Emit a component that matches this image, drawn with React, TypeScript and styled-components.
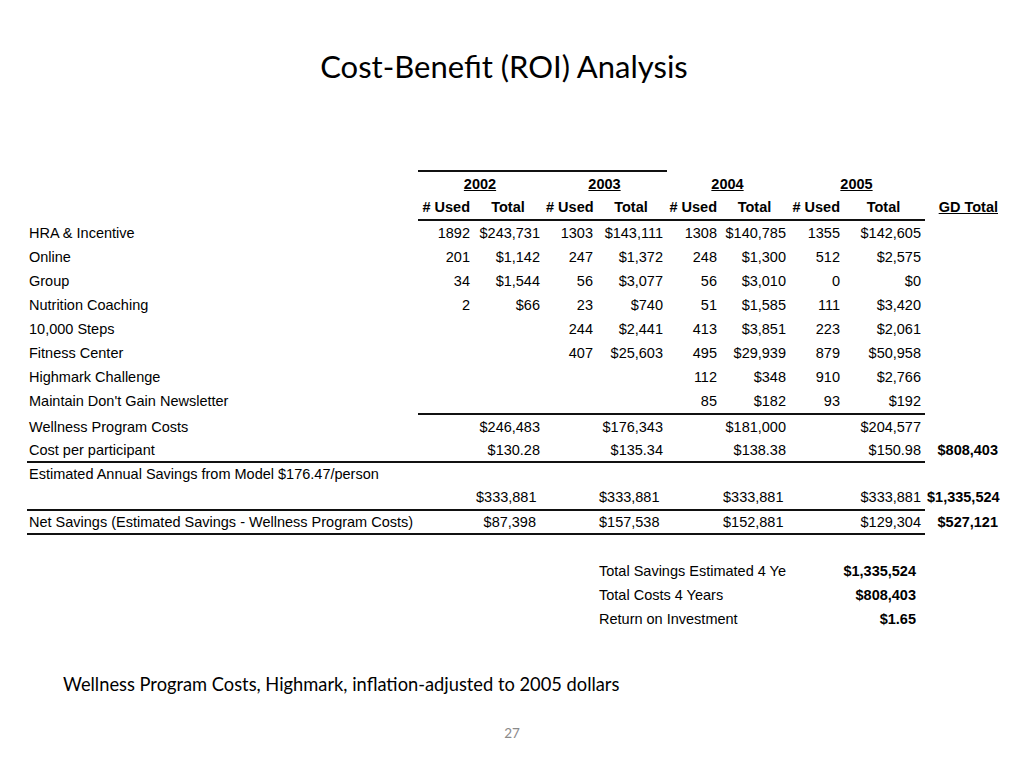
import React from 'react';
import styled, { createGlobalStyle } from 'styled-components';

const GlobalStyle = createGlobalStyle`
  html, body { margin: 0; padding: 0; background: #ffffff; }
  body { width: 1024px; height: 768px; overflow: hidden; }
`;

const COLS = '391px 56px 70px 53px 70px 54px 69px 54px 81px 77px';

const Slide = styled.div`
  width: 1024px;
  height: 768px;
  display: flex;
  flex-direction: column;
  box-sizing: border-box;
  background: #fff;
`;

const Title = styled.h1`
  margin: 0;
  padding: 48px 16px 0 0;
  height: 36px;
  text-align: center;
  font-family: Lato, 'Open Sans', sans-serif;
  font-weight: 400;
  font-size: 31px;
  line-height: 36px;
  color: #000;
`;

const Sheet = styled.div`
  margin-top: 86px;
  padding-left: 27px;
  display: flex;
  flex-direction: column;
  font-family: 'Liberation Sans', Arial, sans-serif;
  font-size: 14.5px;
  color: #000;
`;

const Row = styled.div<{ $h?: number }>`
  display: grid;
  grid-template-columns: ${COLS};
  height: ${(p) => p.$h ?? 24}px;
  align-items: center;
`;

const RuleRow = styled.div`
  display: grid;
  grid-template-columns: ${COLS};
  height: 2px;
`;

const Rule = styled.div<{ $from: number; $to: number }>`
  grid-column: ${(p) => p.$from} / ${(p) => p.$to};
  background: #111;
`;

type Align = 'left' | 'right' | 'center';

const Cell = styled.div<{
  $align?: Align;
  $bold?: boolean;
  $under?: boolean;
  $col?: string;
  $pr?: number;
}>`
  grid-column: ${(p) => p.$col ?? 'auto'};
  text-align: ${(p) => p.$align ?? 'right'};
  font-weight: ${(p) => (p.$bold ? 700 : 400)};
  text-decoration: ${(p) => (p.$under ? 'underline' : 'none')};
  padding: 0 ${(p) => p.$pr ?? 4}px 0 2px;
  white-space: nowrap;
`;

const Label = styled(Cell).attrs({ $align: 'left' as Align })``;

const SummaryLabel = styled.div`
  grid-column: 5 / 8;
  padding-left: 2px;
  white-space: nowrap;
  overflow: hidden;
`;

const SummaryValue = styled.div`
  grid-column: 8 / 10;
  text-align: right;
  padding-right: 9px;
  font-weight: 700;
`;

const Summary = styled.div`
  margin-top: 24px;
  display: flex;
  flex-direction: column;
`;

const Caption = styled.p`
  margin: 41px 0 0;
  padding-left: 63px;
  font-family: Lato, 'Open Sans', sans-serif;
  font-size: 18.3px;
  line-height: 24px;
  color: #000;
`;

const PageNumber = styled.div`
  margin-top: 28px;
  text-align: center;
  font-family: Lato, 'Open Sans', sans-serif;
  font-size: 13.5px;
  line-height: 18px;
  color: #8a8a8a;
`;

const data: string[][] = [
  ['HRA & Incentive', '1892', '$243,731', '1303', '$143,111', '1308', '$140,785', '1355', '$142,605'],
  ['Online', '201', '$1,142', '247', '$1,372', '248', '$1,300', '512', '$2,575'],
  ['Group', '34', '$1,544', '56', '$3,077', '56', '$3,010', '0', '$0'],
  ['Nutrition Coaching', '2', '$66', '23', '$740', '51', '$1,585', '111', '$3,420'],
  ['10,000 Steps', '', '', '244', '$2,441', '413', '$3,851', '223', '$2,061'],
  ['Fitness Center', '', '', '407', '$25,603', '495', '$29,939', '879', '$50,958'],
  ['Highmark Challenge', '', '', '', '', '112', '$348', '910', '$2,766'],
  ["Maintain Don't Gain Newsletter", '', '', '', '', '85', '$182', '93', '$192'],
];

const years = ['2002', '2003', '2004', '2005'];
const yearCols = ['2 / 4', '4 / 6', '6 / 8', '8 / 10'];
const usedCols = ['2', '4', '6', '8'];
const totalCols = ['3', '5', '7', '9'];
const savingsPad = [8, 10, 10, 4];

const TotalsRow: React.FC<{
  label: string;
  values: string[];
  gd?: string;
  h?: number;
  pads?: number[];
}> = ({ label, values, gd, h, pads }) => (
  <Row $h={h}>
    <Label $col="1">{label}</Label>
    {values.map((v, i) => (
      <Cell key={i} $col={totalCols[i]} $pr={pads ? pads[i] : 4}>
        {v}
      </Cell>
    ))}
    {gd ? (
      <Cell $col="10" $bold>
        {gd}
      </Cell>
    ) : null}
  </Row>
);

export default function App() {
  return (
    <Slide>
      <GlobalStyle />
      <Title>Cost-Benefit (ROI) Analysis</Title>
      <Sheet>
        <RuleRow>
          <Rule $from={2} $to={6} />
        </RuleRow>
        <Row $h={23}>
          {years.map((y, i) => (
            <Cell key={y} $col={yearCols[i]} $align="center" $bold $under>
              {y}
            </Cell>
          ))}
        </Row>
        <Row>
          {years.map((y, i) => (
            <React.Fragment key={y}>
              <Cell $col={usedCols[i]} $bold>
                {'# Used'}
              </Cell>
              <Cell $col={totalCols[i]} $bold $align="center">
                Total
              </Cell>
            </React.Fragment>
          ))}
          <Cell $col="10" $bold $under>
            GD Total
          </Cell>
        </Row>
        <RuleRow>
          <Rule $from={2} $to={10} />
        </RuleRow>
        {data.map((r) => (
          <Row key={r[0]}>
            <Label $col="1">{r[0]}</Label>
            {r.slice(1).map((v, i) => (
              <Cell key={i} $col={String(i + 2)}>
                {v}
              </Cell>
            ))}
          </Row>
        ))}
        <RuleRow>
          <Rule $from={2} $to={10} />
        </RuleRow>
        <TotalsRow
          h={23}
          label="Wellness Program Costs"
          values={['$246,483', '$176,343', '$181,000', '$204,577']}
        />
        <TotalsRow
          h={23}
          label="Cost per participant"
          values={['$130.28', '$135.34', '$138.38', '$150.98']}
          gd="$808,403"
        />
        <RuleRow>
          <Rule $from={1} $to={10} />
        </RuleRow>
        <Row $h={22}>
          <Label $col="1 / 8">Estimated Annual Savings from Model $176.47/person</Label>
        </Row>
        <TotalsRow
          label=""
          values={['$333,881', '$333,881', '$333,881', '$333,881']}
          gd="$1,335,524"
          pads={savingsPad}
        />
        <RuleRow>
          <Rule $from={1} $to={10} />
        </RuleRow>
        <TotalsRow
          h={22}
          label="Net Savings (Estimated Savings - Wellness Program Costs)"
          values={['$87,398', '$157,538', '$152,881', '$129,304']}
          gd="$527,121"
          pads={savingsPad}
        />
        <RuleRow>
          <Rule $from={1} $to={10} />
        </RuleRow>
        <Summary>
          <Row>
            <SummaryLabel>Total Savings Estimated 4 Ye</SummaryLabel>
            <SummaryValue>$1,335,524</SummaryValue>
          </Row>
          <Row>
            <SummaryLabel>Total Costs 4 Years</SummaryLabel>
            <SummaryValue>$808,403</SummaryValue>
          </Row>
          <Row>
            <SummaryLabel>Return on Investment</SummaryLabel>
            <SummaryValue>$1.65</SummaryValue>
          </Row>
        </Summary>
      </Sheet>
      <Caption>Wellness Program Costs, Highmark, inflation-adjusted to 2005 dollars</Caption>
      <PageNumber>27</PageNumber>
    </Slide>
  );
}
